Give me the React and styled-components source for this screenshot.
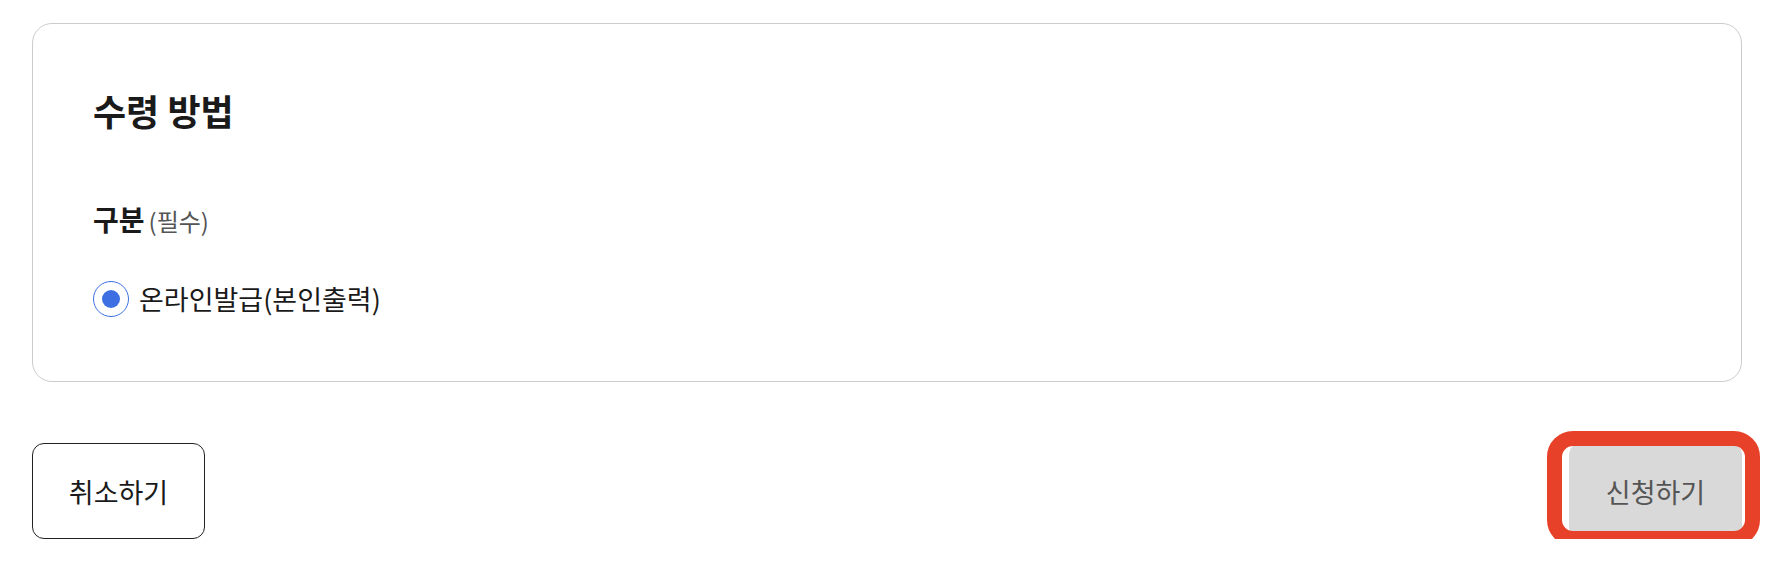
import React from 'react';
import styled, { createGlobalStyle } from 'styled-components';

const GlobalStyle = createGlobalStyle`
  body {
    margin: 0;
    background: #ffffff;
    font-family: "Noto Sans CJK KR", "Noto Sans", sans-serif;
    color: #1a1a1a;
  }
`;

const Page = styled.div`
  padding: 23px 36px 0 32px;
`;

const Card = styled.section`
  box-sizing: border-box;
  height: 359px;
  border: 1px solid #cccccc;
  border-radius: 20px;
  padding: 62px 60px 0 60px;
`;

const Title = styled.h2`
  margin: 0;
  font-size: 36px;
  line-height: 48px;
  font-weight: 700;
  color: #1a1a1a;
`;

const FieldLabel = styled.div`
  margin-top: 66px;
  font-size: 28px;
  line-height: 38px;
  font-weight: 700;
  color: #1a1a1a;
`;

const Required = styled.span`
  margin-left: 4px;
  font-size: 24px;
  font-weight: 400;
  color: #555555;
`;

const RadioRow = styled.label`
  display: flex;
  align-items: center;
  gap: 10px;
  margin-top: 40px;
  font-size: 27px;
  line-height: 38px;
  color: #1a1a1a;
`;

const RadioCircle = styled.span`
  box-sizing: border-box;
  width: 36px;
  height: 36px;
  border-radius: 50%;
  border: 1px solid #3d6fe3;
  display: flex;
  align-items: center;
  justify-content: center;
  &::after {
    content: '';
    width: 18px;
    height: 18px;
    border-radius: 50%;
    background: ${(p) => (p.checked ? '#3d6fe3' : 'transparent')};
  }
`;

const Footer = styled.div`
  display: flex;
  justify-content: space-between;
  align-items: flex-start;
  margin-top: 61px;
`;

const Button = styled.button`
  box-sizing: border-box;
  width: 173px;
  height: 96px;
  border-radius: 12px;
  font-family: inherit;
  font-size: 27px;
  border: ${(p) => (p.disabled ? 'none' : '1px solid #222222')};
  background: ${(p) => (p.disabled ? '#d9d9d9' : '#ffffff')};
  color: ${(p) => (p.disabled ? '#555555' : '#1a1a1a')};
  padding: 0;
`;

const Highlighted = styled.div`
  position: relative;
  display: flex;
`;

const HighlightRing = styled.div`
  position: absolute;
  left: -22px;
  top: -12px;
  right: -18px;
  bottom: -7px;
  border: 15px solid #e84129;
  border-radius: 26px;
  pointer-events: none;
`;

export default function App() {
  return (
    <>
      <GlobalStyle />
      <Page>
        <Card>
          <Title>수령 방법</Title>
          <FieldLabel>
            구분<Required>(필수)</Required>
          </FieldLabel>
          <RadioRow>
            <RadioCircle checked />
            온라인발급(본인출력)
          </RadioRow>
        </Card>
        <Footer>
          <Button>취소하기</Button>
          <Highlighted>
            <Button disabled>신청하기</Button>
            <HighlightRing />
          </Highlighted>
        </Footer>
      </Page>
    </>
  );
}
